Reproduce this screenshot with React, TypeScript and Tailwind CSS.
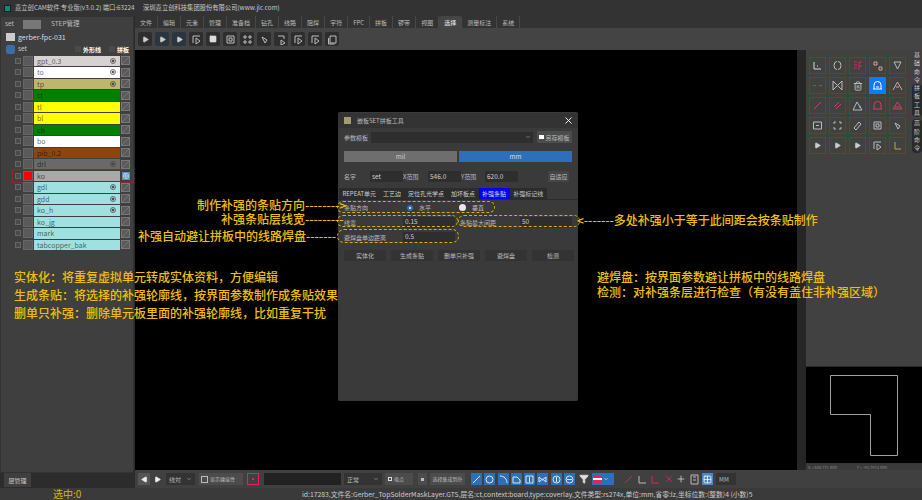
import { ChevronDown, X, Play, Square, Trash2, Filter, Plus, Grid2x2 } from "lucide-react"

const font = { fontFamily: '"Noto Sans CJK SC", "Liberation Sans", sans-serif' }

const layers = [
  { name: "gpt_0.3", bg: "bg-[#d6d2d2]", eye: true },
  { name: "to", bg: "bg-white", eye: true },
  { name: "tp", bg: "bg-[#bdb76b]", eye: true },
  { name: "ct", bg: "bg-[#008000]" },
  { name: "tl", bg: "bg-[#ffff00]" },
  { name: "bl", bg: "bg-[#ffff00]" },
  { name: "cb", bg: "bg-[#008000]" },
  { name: "bo", bg: "bg-white" },
  { name: "pib_0.2", bg: "bg-[#8b4513]" },
  { name: "drl", bg: "bg-[#696969]", eye: true },
  { name: "ko", bg: "bg-[#a9a9a9]", active: true },
  { name: "gdl", bg: "bg-[#a0e0e0]", eye: true },
  { name: "gdd", bg: "bg-[#a0e0e0]", eye: true },
  { name: "ko_h", bg: "bg-[#a0e0e0]", eye: true },
  { name: "ko_jg", bg: "bg-[#a0e0e0]" },
  { name: "mark", bg: "bg-[#a0e0e0]" },
  { name: "tabcopper_bak", bg: "bg-[#a0e0e0]" },
]

const menus = ["文件", "编辑", "元素", "管理", "准备档", "钻孔", "线路", "阻焊", "字符", "FPC", "拼板", "锣带", "视图", "选择", "测量标注", "系统"]

const tabs = ["REPEAT单元", "工艺边", "定位孔光学点", "加坏板点", "补强条贴", "补强标记线"]

function LayerRow({ layer }: { layer: (typeof layers)[number] }) {
  return (
    <div className={`flex items-center h-[11.5px] ml-[13px] w-[120px] ${layer.active ? "outline outline-1 outline-[#8b2a2a]" : ""}`}>
      <div className="w-[6px] h-[6px] ml-[2px] bg-[#4a4a4a] border border-[#666]" />
      <div className={`w-[10px] h-[10px] ml-[2px] border border-[#666] ${layer.active ? "bg-[#ff0000]" : "bg-[#5a5a5a]"}`} />
      <div className={`${layer.bg} w-[86px] h-[10.5px] ml-[1px] flex items-center justify-between px-[3px] text-[7px] text-black/60`}>
        <span>{layer.name}</span>
        {layer.eye && (
          <svg width="6" height="6" viewBox="0 0 6 6" fill="none" stroke="#444" strokeWidth="0.7" className="mr-[1px]">
            <circle cx="3" cy="3" r="2.5" />
            <circle cx="3" cy="3" r="1" fill="#444" />
          </svg>
        )}
      </div>
      {layer.active ? (
        <div className="w-[8px] h-[8px] ml-[2px] bg-[#5b8fc4] flex items-center justify-center">
          <Grid2x2 size={6} className="text-white" />
        </div>
      ) : (
        <svg width="9" height="9" viewBox="0 0 9 9" className="ml-[1px] bg-[#5a5a5a] border border-[#777]" stroke="#888" strokeWidth="0.7">
          <path d="M0 9L9 0" />
        </svg>
      )}
    </div>
  )
}

function ToolBtn({ selected, children }: { selected?: boolean; children?: React.ReactNode }) {
  return (
    <div className={`w-[14px] h-[14px] rounded-[2px] flex items-center justify-center ${selected ? "bg-[#2b3540]" : "bg-[#2e2e2e]"}`}>
      {children ?? <Play size={7} className="text-[#ccc] fill-[#ccc]" />}
    </div>
  )
}

function SideBtn({ active, children }: { active?: boolean; children?: React.ReactNode }) {
  return (
    <div className={`w-[17px] h-[17px] flex items-center justify-center border ${active ? "bg-[#0a7aff] border-[#0a7aff]" : "border-[#8a2f2f]"}`}>
      {children}
    </div>
  )
}

function SideLabel({ text, pill }: { text: string[]; pill?: boolean }) {
  return (
    <div className={`w-[10px] text-center shrink-0 rounded-[4px] ${pill ? "bg-[#2a2a2a]" : ""}`}>
      {text.map((c) => (
        <div key={c}>{c}</div>
      ))}
    </div>
  )
}

function Line({ color = "#bbb", d }: { color?: string; d: string }) {
  return (
    <svg width="11" height="11" viewBox="0 0 11 11" fill="none" stroke={color} strokeWidth="1">
      <path d={d} />
    </svg>
  )
}

function DialogButton({ label }: { label: string }) {
  return <div className="w-[42px] h-[11px] bg-[#333] rounded-[1px] flex items-center justify-center text-[6px] text-[#bbb]">{label}</div>
}

function Field({ value, w }: { value: string; w: string }) {
  return <div className={`${w} h-[11px] bg-[#2e2e2e] flex items-center px-[2px] text-[6.5px] text-[#ccc]`}>{value}</div>
}

function BottomBlue({ d }: { d: string }) {
  return (
    <div className="w-[11px] h-[12px] bg-[#2d6fb8] flex items-center justify-center">
      <Line color="#dbe8f5" d={d} />
    </div>
  )
}

export default function App() {
  return (
    <div className="relative w-[922px] h-[500px] overflow-hidden bg-[#3c3c3c] flex flex-col" style={font}>
      {/* title bar */}
      <div className="h-[16px] shrink-0 bg-[#333] flex items-center pl-[4px] text-[6.3px] text-[#c8c8c8]">
        <div className="w-[7px] h-[7px] bg-[#0f8a70] border border-[#123] mr-[4px]" />
        <span className="w-[128px]">嘉立创CAM软件 专业版(v3.0.2) 端口:63224</span>
        <span>深圳嘉立创科技集团股份有限公司(www.jlc.com)</span>
      </div>

      <div className="flex flex-1 min-h-0">
        {/* left layer panel */}
        <div className="w-[135px] shrink-0 bg-[#2c2c2c] flex flex-col border-r border-[#2a2a2a]">
          <div className="flex-1 min-h-0 bg-[#3f3f3f] border border-[#333]">
            <div className="h-[14px] flex items-center pl-[4px] text-[6.5px] text-[#bbb]">
              <span className="w-[18px]">set</span>
              <div className="w-[18px] h-[9px] bg-[#777] mr-[10px]" />
              <span>STEP管理</span>
            </div>
            <div className="h-[12px] flex items-center pl-[5px] text-[7px] text-[#ddd]">
              <div className="w-[9px] h-[8px] bg-[#ccc] mr-[3px]" />
              gerber-fpc-031
            </div>
            <div className="h-[12px] flex items-center pl-[5px] text-[6.5px] text-[#ccc]">
              <div className="w-[9px] h-[9px] rounded-[2px] bg-[#3a6ea5] mr-[3px]" />
              <span className="w-[57px]">set</span>
              <div className="w-[6px] h-[6px] bg-[#4a4a4a] mr-[2px]" />
              <span className="w-[26px] font-bold text-[6px] text-white">外形线</span>
              <div className="w-[6px] h-[6px] bg-[#4a4a4a] mr-[2px]" />
              <span className="font-bold text-[6px] text-white">拼板</span>
            </div>
            <div className="flex flex-col -ml-[1px]">
              {layers.map((l) => (
                <LayerRow key={l.name} layer={l} />
              ))}
            </div>
          </div>
          <div className="h-[15px] shrink-0 flex items-start pl-[4px]">
            <div className="w-[27px] h-[14px] bg-[#3f3f3f] flex items-center justify-center text-[6px] text-[#ccc]">层管理</div>
          </div>
        </div>

        {/* main */}
        <div className="flex-1 min-w-0 flex flex-col">
          <div className="h-[12px] shrink-0 flex items-center bg-[#333] text-[6px] text-[#bbb]">
            {menus.map((m) => (
              <div
                key={m}
                className={`h-full px-[5px] flex items-center border-r border-[#484848] ${m === "选择" ? "bg-[#454545] rounded-t-[3px] text-[#eee]" : ""}`}
              >
                {m}
              </div>
            ))}
          </div>
          <div className="h-[22px] shrink-0 bg-[#444] flex items-center pl-[3px] gap-[3px]">
            <ToolBtn />
            <ToolBtn selected />
            <ToolBtn selected />
            <ToolBtn><Line d="M2 9V2h7M5 4l4 3-4 3z" /></ToolBtn>
            <ToolBtn><Square size={8} className="text-[#ddd] fill-[#ddd]" /></ToolBtn>
            <ToolBtn><Line d="M2 2h7v7H2zM4 4h3v3H4z" /></ToolBtn>
            <ToolBtn><Line d="M2 2h2v2H2zM7 2h2v2H7zM2 7h2v2H2zM7 7h2v2H7z" /></ToolBtn>
            <ToolBtn><Line d="M3 3l5 3-2 3z" /></ToolBtn>
            <ToolBtn><Line d="M2 2h6v3M5 6l4 3-4 2z" /></ToolBtn>
            <ToolBtn><Line d="M2 9V2h7M5 4l4 3-4 3z" /></ToolBtn>
            <ToolBtn><Line d="M2 9V2h7M5 4l4 3-4 3z" /></ToolBtn>
            <ToolBtn><Line d="M3 2h6v7H3zM1.5 4v6h6" /></ToolBtn>
          </div>

          <div className="flex-1 min-h-0 flex">
            {/* canvas */}
            <div className="flex-1 bg-black" />
            <div className="w-[9px] bg-[#262626]" />
            {/* right column */}
            <div className="w-[116px] shrink-0 flex flex-col">
              <div className="flex-1 bg-[#414141] flex pt-[7px] pl-[3px]">
                <div className="grid grid-cols-5 gap-[3px] h-fit">
                  <SideBtn><Line color="#d8d8d8" d="M2 2v7h7M5 6h1" /></SideBtn>
                  <SideBtn><Line d="M6 1.5a3 4 0 0 1 0 8M5 1.5a3 4 0 0 0 0 8" /></SideBtn>
                  <SideBtn><Line color="#e0245e" d="M2 2h3M2 5h3M2 8h3M7 2h3M7 2v8M7 6h3" /></SideBtn>
                  <SideBtn><Line color="#d8a0a0" d="M2 2h3v3H2zM7 7h3v3H7z" /></SideBtn>
                  <SideBtn><Line d="M2 2l3.5 7L9 2M2 2h7" /></SideBtn>
                  <SideBtn><Line color="#e0245e" d="M1 5.5h3M7 5.5h3" /></SideBtn>
                  <SideBtn><Line d="M1 1v9l4.5-4.5L10 10V1L5.5 5.5z" /></SideBtn>
                  <SideBtn><Trash2 size={10} className="text-[#ccc]" /></SideBtn>
                  <SideBtn active><Line color="#fff" d="M2 9V5a3.5 3.5 0 0 1 7 0v4M1 9h9M4 7h3" /></SideBtn>
                  <SideBtn><Line color="#d8a0a0" d="M1 10l4.5-8L10 10M4 7h3" /></SideBtn>
                  <SideBtn><Line color="#d04060" d="M2 9l7-7" /></SideBtn>
                  <SideBtn><Line color="#d04060" d="M2 7l5-5M4 9l5-5" /></SideBtn>
                  <SideBtn><Line d="M1 10h9L5 2zM7 7h2" /></SideBtn>
                  <SideBtn><Line color="#d04060" d="M2 9V5a3.5 3.5 0 0 1 7 0v4M1 9h9" /></SideBtn>
                  <SideBtn><Line color="#d04060" d="M1 9l4.5-7L10 9zM3 7h5" /></SideBtn>
                  <SideBtn><Line d="M1.5 2h8v7h-8zM4 5.5h3" /></SideBtn>
                  <SideBtn><Line d="M2 2h2M7 2h2M2 9h2M7 9h2M2 2v2M9 2v2M2 7v2M9 7v2" /></SideBtn>
                  <SideBtn><Line d="M2 8l5-6 2 2-5 6z" /></SideBtn>
                  <SideBtn><Line d="M2 2h7v7H2zM4 4h3v3H4z" /></SideBtn>
                  <SideBtn><Line d="M3 3l5 3-2 3z" /></SideBtn>
                  <SideBtn><Play size={7} className="text-[#ccc] fill-[#ccc]" /></SideBtn>
                  <SideBtn><Play size={7} className="text-[#ccc] fill-[#ccc]" /></SideBtn>
                  <SideBtn><Play size={7} className="text-[#ccc] fill-[#ccc]" /></SideBtn>
                  <SideBtn><Line d="M2 9V2h7M5 4l4 3-4 3z" /></SideBtn>
                  <SideBtn><Line color="#c8a050" d="M3 2v7h6" /></SideBtn>
                </div>
                <div className="ml-[6px] -mt-[6px] flex flex-col text-[6px] leading-[8.3px] text-[#ccc]">
                  <SideLabel text={["基", "础", "命", "令"]} />
                  <SideLabel pill text={["拼", "板", "工", "具"]} />
                  <div className="h-[2px] shrink-0" />
                  <SideLabel pill text={["高", "阶", "命", "令"]} />
                </div>
              </div>
              <div className="h-[1px] bg-[#2a2a2a]" />
              {/* minimap */}
              <div className="h-[96px] bg-black">
                <svg width="116" height="96" viewBox="0 0 116 96" fill="none" stroke="#a0a0a0" strokeWidth="1">
                  <path d="M24.5 8.5h67v80h-27v-41h-40z" />
                </svg>
              </div>
              <div className="h-[7px] bg-[#3a3a3a] flex items-center text-[4px] text-[#888] gap-[20px] pl-[2px]">
                <span>X = 848.771 mm</span>
                <span>Y = -92.7973 mm</span>
              </div>
            </div>
          </div>

          {/* bottom toolbar */}
          <div className="h-[18px] shrink-0 bg-[#404040] flex items-center pl-[3px] gap-[3px] text-[5px] text-[#bbb]">
            <div className="w-[12px] h-[12px] bg-[#555] flex items-center justify-center"><Play size={7} className="rotate-180 text-[#eee] fill-[#eee]" /></div>
            <div className="w-[12px] h-[12px] -ml-[2px] flex items-center justify-center"><Play size={7} className="text-[#eee] fill-[#eee]" /></div>
            <div className="w-[29px] h-[12px] bg-[#333] flex items-center justify-between px-[3px] text-[6px]">
              <span>线対</span>
              <ChevronDown size={6} />
            </div>
            <div className="w-[44px] h-[12px] ml-[1px] bg-[#4c4c4c] flex items-center px-[2px] gap-[2px]">
              <div className="w-[7px] h-[7px] border border-[#bbb]" />
              显示鍊接性
            </div>
            <div className="w-[12px] h-[12px] border border-[#e0245e] flex items-center justify-center ml-[1px] mr-[2px]">
              <div className="w-[2px] h-[2px] bg-[#e0245e]" />
            </div>
            <div className="w-[77px] h-[12px] bg-[#222]" />
            <div className="w-[38px] h-[12px] bg-[#333] flex items-center justify-between px-[3px] text-[6px]">
              <span>正常</span>
              <ChevronDown size={6} />
            </div>
            <div className="w-[28px] h-[12px] bg-[#4c4c4c] flex items-center px-[3px] gap-[2px]">
              <div className="w-[4px] h-[4px] border border-[#ddd]" />
              吸点
            </div>
            <div className="w-[9px] h-[12px] ml-[2px] bg-[#4c4c4c] flex items-center justify-center">
              <div className="w-[3px] h-[3px] bg-[#bbb]" />
            </div>
            <div className="w-[35px] h-[12px] bg-[#4c4c4c] flex items-center justify-center">选择集成到外</div>
            <div className="flex items-center gap-[2.3px] ml-[3px]">
              <BottomBlue d="M2 9l7-7" />
              <BottomBlue d="M2 5.5a3.5 3.5 0 1 0 7 0a3.5 3.5 0 1 0-7 0" />
              <BottomBlue d="M2 2c4 0 7 3 7 7" />
              <BottomBlue d="M2 9V3h4l3 3v3z" />
              <BottomBlue d="M2 2h7v7H2zM5.5 3v5" />
              <BottomBlue d="M2 3l3.5 3L9 3v5L5.5 5 2 8z" />
              <BottomBlue d="M2 5.5a3.5 3.5 0 1 0 7 0a3.5 3.5 0 1 0-7 0M5.5 3v5" />
              <BottomBlue d="M2 5.5a3.5 3.5 0 1 0 7 0a3.5 3.5 0 1 0-7 0M3 5.5h5" />
            </div>
            <Filter size={10} className="text-[#ddd] fill-[#ddd] ml-[1px]" />
            <div className="w-[22px] h-[12px] bg-[#2d6fb8] flex items-center gap-[1px] px-[1px]">
              <div className="w-[9px] h-[8px] bg-white border-y-[3px] border-[#e0245e]" />
              <ChevronDown size={6} className="text-white" />
            </div>
            <div className="flex items-center gap-[2.5px] ml-[6px]">
              <Line color="#a04050" d="M2 9l7-7" />
              <Line color="#bbb" d="M2 2v7h7" />
              <Line color="#e0245e" d="M2 2v7h7" />
              <X size={10} className="text-[#e0245e]" />
              <Plus size={10} className="text-[#ccc]" />
              <Line d="M2 1h7v9H2zM4 3h3M4 6h3" />
              <div className="w-[11px] h-[12px] bg-[#4a86c5] flex items-center justify-center"><Grid2x2 size={9} className="text-white" /></div>
            </div>
            <div className="w-[20px] h-[12px] bg-[#333] flex items-center px-[3px] text-[6px]">MM</div>
          </div>
        </div>
      </div>

      {/* status bar */}
      <div className="h-[12px] shrink-0 bg-[#3a3a3a] flex items-center whitespace-nowrap leading-none">
        <span className="w-[302px] pl-[53px] text-[10px] leading-[12px] text-[#d8b800]">选中:0</span>
        <span className="text-[6.8px] leading-[12px] text-[#ccc]">
          id:17283,文件名:Gerber_TopSolderMaskLayer.GTS,层名:ct,context:board,type:coverlay,文件类型:rs274x,单位:mm,省零:lz,坐标位数:(整数)4 (小数)5
        </span>
      </div>

      {/* dialog */}
      <div className="absolute left-[338px] top-[112px] w-[240px] h-[289px] bg-[#3a3a3a] rounded-[2px] flex flex-col text-[#bbb] text-[6px]">
        <div className="h-[15px] bg-[#333] flex items-center pl-[6px] pr-[4px] rounded-t-[2px] mt-[1px]">
          <div className="w-[7px] h-[7px] bg-[#a89a70] mr-[6px]" />
          <span className="flex-1">嵌板SET拼板工具</span>
          <X size={11} className="text-white" />
        </div>
        <div className="h-[12px] mt-[3px] flex items-center pl-[6px]">
          <span className="w-[27px]">参数模板</span>
          <div className="w-[162px] h-[11px] bg-[#2e2e2e] flex items-center justify-end pr-[2px]">
            <ChevronDown size={6} />
          </div>
          <div className="w-[35px] h-[12px] ml-[4px] bg-[#4c4c4c] flex items-center justify-center gap-[1px]">
            <div className="w-[5px] h-[4px] bg-white" />
            <span>另存模板</span>
          </div>
        </div>
        <div className="h-[11px] mt-[8px] flex gap-[2px] px-[6px]">
          <div className="w-[113px] bg-[#6e6e6e] flex items-center justify-center text-[6.5px] text-[#ccc]">mil</div>
          <div className="w-[113px] bg-[#2d6fbb] flex items-center justify-center text-[6.5px] text-[#ddd]">mm</div>
        </div>
        <div className="h-[11px] mt-[9px] flex items-center pl-[6px]">
          <span className="w-[26px]">名字</span>
          <Field value="set" w="w-[33px]" />
          <span className="w-[25px]">X范围</span>
          <Field value="546.0" w="w-[33px]" />
          <span className="w-[24px]">Y范围</span>
          <Field value="620.0" w="w-[33px]" />
          <div className="w-[21px] h-[11px] ml-[30px] bg-[#444] flex items-center justify-center">自适应</div>
        </div>
        <div className="h-[12px] mt-[6px] flex items-stretch pl-[1px] border-b border-[#2c2c2c]">
          {tabs.map((t) => (
            <div
              key={t}
              className={`flex items-center justify-center px-[3.5px] text-[6px] ${t === "补强条贴" ? "bg-[#0000ff] text-[#ddd]" : "bg-[#2c2c2c] text-[#ccc]"}`}
            >
              {t}
            </div>
          ))}
        </div>
        <div className="h-[13px] mt-[1px] flex items-center pl-[6px]">
          <span className="w-[63px]">条贴方向</span>
          <div className="w-[6px] h-[6px] rounded-full bg-white border-2 border-[#2d6fbb] mr-[6px]" />
          <span className="w-[40px]">水平</span>
          <div className="w-[7px] h-[7px] rounded-full bg-[#e8e8e8] mr-[6px]" />
          <span>垂直</span>
        </div>
        <div className="h-[12px] mt-[2px] flex items-center pl-[6px]">
          <span className="w-[59px]">线宽</span>
          <Field value="0.15" w="w-[52px]" />
          <span className="w-[60px] ml-[5px]">条贴最大间距</span>
          <Field value="50" w="w-[52px]" />
        </div>
        <div className="h-[12px] mt-[3px] flex items-center pl-[6px]">
          <span className="w-[59px]">避焊盘单边距离</span>
          <Field value="0.5" w="w-[52px]" />
        </div>
        <div className="mt-[7px] pl-[6px] flex gap-[5px]">
          {["实体化", "生成条贴", "删单只补强", "避焊盘", "检测"].map((b) => (
            <DialogButton key={b} label={b} />
          ))}
        </div>
      </div>

      {/* dashed callouts over the dialog */}
      <div className="absolute left-[337px] top-[201px] w-[158px] h-[12px] border border-dashed border-[#d8b000] rounded-full" />
      <div className="absolute left-[337px] top-[215px] w-[121px] h-[12px] border border-dashed border-[#d8b000] rounded-full" />
      <div className="absolute left-[458px] top-[215px] w-[122px] h-[12px] border border-dashed border-[#d8b000] rounded-full" />
      <div className="absolute left-[337px] top-[229px] w-[122px] h-[14px] border border-dashed border-[#d8b000] rounded-full" />

      {/* yellow annotations */}
      <div className="absolute left-[197px] top-[198px] text-[12px] leading-[14px] font-medium text-[#f0c000] whitespace-nowrap">制作补强的条贴方向--------&gt;</div>
      <div className="absolute left-[221px] top-[212px] text-[12px] leading-[14px] font-medium text-[#f0c000] whitespace-nowrap">补强条贴层线宽---------</div>
      <div className="absolute left-[138px] top-[229px] text-[12px] leading-[14px] font-medium text-[#f0c000] whitespace-nowrap">补强自动避让拼板中的线路焊盘-------</div>
      <div className="absolute left-[577px] top-[212px] text-[12px] leading-[16px] font-medium text-[#f0c000] whitespace-nowrap">&lt;-------多处补强小于等于此间距会按条贴制作</div>
      <div className="absolute left-[14px] top-[268px] text-[12px] leading-[18px] font-medium text-[#f0c000] whitespace-nowrap">
        <div>实体化&#xFF1A;将重复虚拟单元转成实体资料&#xFF0C;方便编辑</div>
        <div>生成条贴&#xFF1A;将选择的补强轮廓线&#xFF0C;按界面参数制作成条贴效果</div>
        <div>删单只补强&#xFF1A;删除单元板里面的补强轮廓线&#xFF0C;比如重复干扰</div>
      </div>
      <div className="absolute left-[597px] top-[269px] text-[12px] leading-[15px] font-medium text-[#f0c000] whitespace-nowrap">
        <div>避焊盘&#xFF1A;按界面参数避让拼板中的线路焊盘</div>
        <div>检测&#xFF1A;对补强条层进行检查&#xFF08;有没有盖住非补强区域&#xFF09;</div>
      </div>
    </div>
  )
}
